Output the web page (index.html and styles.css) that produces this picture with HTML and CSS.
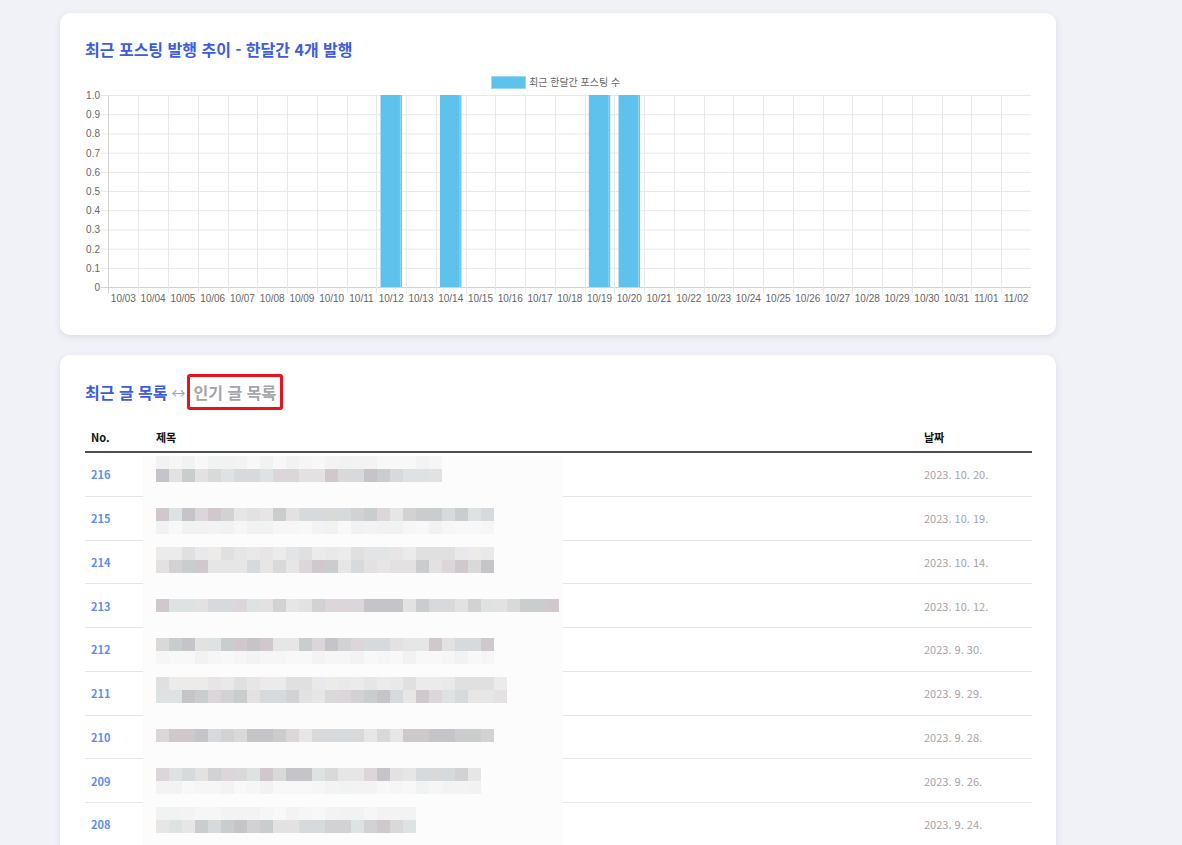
FILE: index.html
```html
<!DOCTYPE html>
<html lang="ko">
<head>
<meta charset="utf-8">
<title>블로그 통계</title>
<link rel="stylesheet" href="styles.css">
</head>
<body>
<main class="page">
  <section class="card card-chart">
    <h2 class="card-title">최근 포스팅 발행 추이 - 한달간 4개 발행</h2>
    <svg id="chart" class="chart" width="946" height="236" viewBox="0 0 946 236" xmlns="http://www.w3.org/2000/svg">
      <rect class="legend-box" x="406.5" y="6.5" width="34" height="12"></rect>
      <text class="legend-text" x="444" y="16">최근 한달간 포스팅 수</text>
      <g id="grid"></g>
      <g id="bars"></g>
      <g id="labels"></g>
    </svg>
  </section>

  <section class="card card-list">
    <div class="list-title">
      <span class="tab-active">최근 글 목록</span>
      <span class="tab-arrow">↔</span>
      <span class="tab-other">인기 글 목록</span>
    </div>
    <div class="table-wrap">
      <table class="post-table">
        <colgroup><col class="col-no"><col class="col-title"><col class="col-date"></colgroup>
        <thead>
          <tr><th>No.</th><th>제목</th><th>날짜</th></tr>
        </thead>
        <tbody>
          <tr><td class="num">216</td><td></td><td class="date">2023. 10. 20.</td></tr>
          <tr><td class="num">215</td><td></td><td class="date">2023. 10. 19.</td></tr>
          <tr><td class="num">214</td><td></td><td class="date">2023. 10. 14.</td></tr>
          <tr><td class="num">213</td><td></td><td class="date">2023. 10. 12.</td></tr>
          <tr><td class="num">212</td><td></td><td class="date">2023. 9. 30.</td></tr>
          <tr><td class="num">211</td><td></td><td class="date">2023. 9. 29.</td></tr>
          <tr><td class="num">210</td><td></td><td class="date">2023. 9. 28.</td></tr>
          <tr><td class="num">209</td><td></td><td class="date">2023. 9. 26.</td></tr>
          <tr><td class="num">208</td><td></td><td class="date">2023. 9. 24.</td></tr>
        </tbody>
      </table>
      <div id="mosaic" class="mosaic"></div>
    </div>
  </section>
</main>
<script src="script.js"></script>
</body>
</html>
```

FILE: styles.css
```css
html, body {
  margin: 0;
  padding: 0;
}
body {
  background: #f0f2f7;
  font-family: "Noto Sans CJK KR", "Noto Sans", sans-serif;
}
.page {
  width: 996px;
  margin-left: 60px;
  padding-top: 13px;
  display: flex;
  flex-direction: column;
  gap: 20px;
}
.card {
  background: #fff;
  border-radius: 10px;
  box-shadow: 0 2px 6px rgba(60, 80, 140, 0.13);
}
.card-chart {
  padding: 25px 25px 29px 25px;
}
.card-title {
  margin: 0;
  font-size: 16px;
  line-height: 22px;
  font-weight: 700;
  color: #3d5ce0;
}
.chart {
  display: block;
  margin-top: 10px;
  overflow: visible;
}
.legend-box {
  fill: #5ec2ed;
  stroke: #9bd8f3;
  stroke-width: 1;
}
.legend-text, .axis-label {
  font-family: "Liberation Sans", "Noto Sans CJK KR", sans-serif;
  font-size: 10px;
  fill: #666;
}
.grid-line {
  stroke: #e8e8e8;
  stroke-width: 1;
}
.axis-line {
  stroke: #d2d2d2;
  stroke-width: 1;
}
.bar {
  fill: #5ec2ed;
}
.bar-edge {
  fill: #8fd4f3;
}

.card-list {
  padding: 19px 24px 25px 25px;
}
.list-title {
  display: flex;
  align-items: center;
  height: 36px;
  font-size: 16px;
  line-height: 22px;
  font-weight: 700;
}
.tab-active {
  color: #3d5ce0;
  margin-right: 4px;
}
.tab-arrow {
  color: #a6a6a6;
  font-weight: 400;
  font-size: 14px;
  width: 15px;
}
.tab-other {
  color: #a3a5ab;
  border: 3px solid #e8141c;
  border-radius: 3px;
  padding: 4px 4px 4px 4px;
  line-height: 22px;
}
.table-wrap {
  position: relative;
  margin-top: 12px;
}
.post-table {
  width: 947px;
  border-collapse: collapse;
  table-layout: fixed;
  font-size: 11px;
}
.col-no { width: 65px; }
.col-title { width: 768px; }
.col-date { width: 114px; }
.post-table th {
  height: 29px;
  padding: 0 6px;
  text-align: left;
  font-weight: 700;
  color: #111;
  border-bottom: 2px solid #4e4e4e;
  vertical-align: middle;
}
.post-table td {
  height: 42.75px;
  padding: 0 6px;
  border-bottom: 1px solid #e6e6e8;
  vertical-align: middle;
}
.num {
  color: #5b8ff0;
  font-weight: 700;
}
.date {
  color: #a6a2a8;
}
.mosaic {
  position: absolute;
  left: 58px;
  top: 34px;
  width: 420px;
  height: 400px;
  background: #fcfcfc;
  overflow: hidden;
}
.m-row {
  display: flex;
  height: 13px;
}
.m-cell {
  flex: 0 0 13px;
  height: 13px;
}
.w { background: #fdfcfa; }
.d0 { background: #d2d1d3; }
.d1 { background: #dcd6da; }
.d2 { background: #c9cdce; }
.d3 { background: #e3e1e1; }
.d4 { background: #d7dadc; }
.d5 { background: #d0c8cd; }
.d6 { background: #e6e6e6; }
.d7 { background: #c5c5c9; }
.d8 { background: #dde2e2; }
.d9 { background: #d9d9d9; }
.m0 { background: #e7e5e6; }
.m1 { background: #ebebeb; }
.m2 { background: #e2e4e5; }
.m3 { background: #ecebe9; }
.m4 { background: #e0e0e0; }
.m5 { background: #e9e8ea; }
.f0 { background: #f3f3f3; }
.f1 { background: #f6f6f6; }
.f2 { background: #f1f2f2; }
.f3 { background: #f8f8f8; }
```

FILE: script.js
```js
(function () {
  var NS = 'http://www.w3.org/2000/svg';
  function el(parent, tag, attrs, text) {
    var e = document.createElementNS(NS, tag);
    for (var k in attrs) e.setAttribute(k, attrs[k]);
    if (text != null) e.textContent = text;
    parent.appendChild(e);
    return e;
  }
  var L = 23.5, R = 946, T = 25.5, B = 217.5;
  var n = 31, cw = (R - L) / n, step = (B - T) / 10;
  var grid = document.getElementById('grid');
  var labels = document.getElementById('labels');
  var bars = document.getElementById('bars');

  for (var i = 0; i <= 10; i++) {
    var y = T + i * step;
    el(grid, 'line', { x1: L - 8, x2: R, y1: y, y2: y, 'class': i === 10 ? 'axis-line' : 'grid-line' });
    var lbl = i === 10 ? '0' : (1 - i / 10).toFixed(1);
    el(labels, 'text', { x: 15, y: y + 3.5, 'text-anchor': 'end', 'class': 'axis-label' }, lbl);
  }
  for (var k = 0; k < n; k++) {
    var x = Math.round(L + k * cw) + 0.5;
    if (k === 0) x = L;
    el(grid, 'line', { x1: x, x2: x, y1: T, y2: B + 6, 'class': k === 0 ? 'axis-line' : 'grid-line' });
  }
  var start = new Date(2023, 9, 3);
  for (var d = 0; d < n; d++) {
    var dt = new Date(start.getTime() + d * 86400000);
    var mm = ('0' + (dt.getMonth() + 1)).slice(-2);
    var dd = ('0' + dt.getDate()).slice(-2);
    el(labels, 'text', { x: L + d * cw + cw / 2, y: 232, 'text-anchor': 'middle', 'class': 'axis-label' }, mm + '/' + dd);
  }
  var bw = cw * 0.72;
  [9, 11, 16, 17].forEach(function (idx) {
    var bx = L + idx * cw + (cw - bw) / 2;
    el(bars, 'rect', { x: bx, y: T - 0.5, width: bw, height: B - T, 'class': 'bar' });
    el(bars, 'rect', { x: bx + bw - 2, y: T - 0.5, width: 1, height: B - T, 'class': 'bar-edge' });
  });

  // pixelated (blurred) titles
  var lines = {
    0: ['f', 22], 1: ['d', 22],
    4: ['d', 26], 5: ['f', 26],
    7: ['m', 26], 8: ['d', 26],
    11: ['d', 31],
    14: ['d', 26], 15: ['f', 26],
    17: ['m', 27], 18: ['d', 27],
    21: ['d', 26],
    24: ['d', 25], 25: ['f', 25],
    27: ['f', 20], 28: ['d', 20]
  };
  var counts = { d: 10, m: 6, f: 4 };
  var seed = 12345;
  function rnd() { seed = (seed * 1103515245 + 12345) % 2147483648; return seed / 2147483648; }
  var mosaic = document.getElementById('mosaic');
  for (var r = 0; r < 30; r++) {
    var row = document.createElement('div');
    row.className = 'm-row';
    var spec = lines[r];
    if (spec) {
      var c0 = document.createElement('span');
      c0.className = 'm-cell w';
      row.appendChild(c0);
      for (var c = 0; c < spec[1]; c++) {
        var cell = document.createElement('span');
        cell.className = 'm-cell ' + spec[0] + Math.floor(rnd() * counts[spec[0]]);
        row.appendChild(cell);
      }
    }
    mosaic.appendChild(row);
  }
})();
```
